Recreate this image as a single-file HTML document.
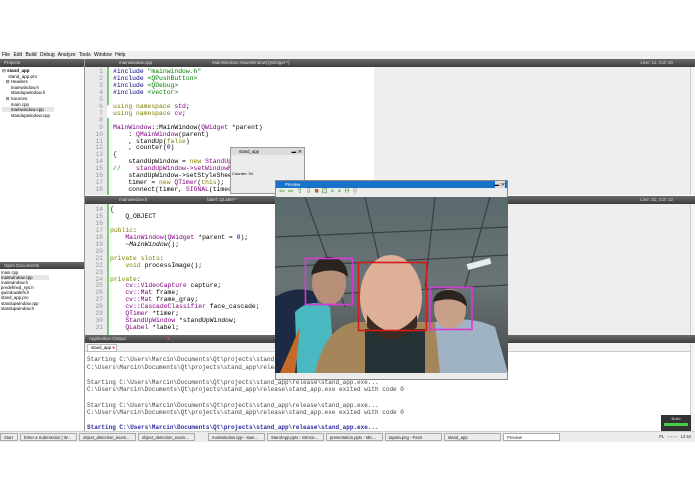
<!DOCTYPE html>
<html><head><meta charset="utf-8"><style>
*{margin:0;padding:0;box-sizing:border-box}
body{width:695px;height:494px;background:#fff;position:relative;overflow:hidden;font-family:"Liberation Sans",sans-serif}
.a{position:absolute}
.menu{left:0;top:51px;width:695px;height:8px;background:#f0f0f0;font-size:5px;line-height:8px;padding-left:2px;word-spacing:2px}
.bar{background:linear-gradient(#6a6a6a,#3e3e3e);color:#ddd;font-size:4.5px;line-height:8px;padding-left:4px}
.mono{font-family:"Liberation Mono","DejaVu Sans Mono",monospace}
.code{font-size:6.4px;line-height:6.95px;white-space:pre;color:#000}
.ln{background:#eaeaea;color:#999;text-align:right;font-size:6.4px;line-height:6.95px;white-space:pre;padding-right:4px}
.k{color:#808000}.c{color:#800080}.s{color:#008000}.n{color:#000080}
.tree{font-size:4.5px;line-height:5.6px;color:#000;white-space:pre}
.out{font-size:6px;line-height:7.6px;white-space:pre;color:#444}
.tb{font-size:4.2px;line-height:8px;color:#222;white-space:nowrap}
.tbi{position:absolute;top:1px;height:8px;border:1px solid #aaa;background:#ececec;padding-left:3px;overflow:hidden}
</style></head><body>
<div class="a menu">File Edit Build Debug Analyze Tools Window Help</div>
<div class="a bar" style="left:0;top:59px;width:84px;height:8px">Projects</div>
<div class="a bar" style="left:85px;top:59px;width:610px;height:8px"><span style="margin-left:30px">mainwindow.cpp</span><span style="margin-left:60px">MainWindow::MainWindow(QWidget *)</span><span style="position:absolute;right:22px">Line: 11, Col: 20</span></div>
<div class="a tree" style="left:2px;top:68px">⊟ <b>stand_app</b>
     stand_app.pro
   ⊟ Headers
       mainwindow.h
       standupwindow.h
   ⊟ Sources
       main.cpp
<span style="background:#e6e6e6">       mainwindow.cpp        </span>
       standupwindow.cpp</div>
<div class="a bar" style="left:0;top:262px;width:84px;height:7px;line-height:7px">Open Documents</div>
<div class="a tree" style="left:1px;top:270px;line-height:5.1px;font-size:4.3px">main.cpp
<span style="background:#e6e6e6">mainwindow.cpp              </span>
mainwindow.h
predefined_sys.h
qwindowdefs.h
stand_app.pro
standupwindow.cpp
standupwindow.h</div>
<div class="a" style="left:84px;top:59px;width:1px;height:382px;background:#999"></div>
<div class="a" style="left:374px;top:67px;width:316px;height:128px;background:#eeeeee"></div>
<div class="a" style="left:690px;top:67px;width:5px;height:128px;background:#f4f4f4;border-left:1px solid #ccc"></div>
<div class="a ln mono" style="left:85px;top:67px;width:22px;height:128px;padding-top:2px">1
2
3
4
5
6
7
8
9
10
11
12
13
14
15
16
17
18</div>
<div class="a" style="left:107px;top:67px;width:2px;height:128px;background:linear-gradient(#7c7 0,#7c7 30%,#fff 30%,#fff 40%,#7c7 40%)"></div>
<div class="a code mono" style="left:113px;top:69px"><span class="n">#include</span> <span class="s">"mainwindow.h"</span>
<span class="n">#include</span> <span class="s">&lt;QPushButton&gt;</span>
<span class="n">#include</span> <span class="s">&lt;QDebug&gt;</span>
<span class="n">#include</span> <span class="s">&lt;vector&gt;</span>

<span class="k">using namespace</span> <span class="c">std</span>;
<span class="k">using namespace</span> <span class="c">cv</span>;

<span class="c">MainWindow</span>::MainWindow(<span class="c">QWidget</span> *parent)
    : <span class="c">QMainWindow</span>(parent)
    , standUp(<span class="k">false</span>)
    , counter(<span class="n">0</span>)
{
    standUpWindow = <span class="k">new</span> <span class="c">StandUpWindo</span>
<span class="s">//</span>    <span class="c">standUpWindow-&gt;setWindowModali</span>
    standUpWindow-&gt;setStyleSheet(<span class="s">"ba</span>
    timer = <span class="k">new</span> <span class="c">QTimer</span>(<span class="k">this</span>);
    connect(timer, <span class="c">SIGNAL</span>(timeout()),</div>
<div class="a bar" style="left:85px;top:196px;width:610px;height:8px"><span style="margin-left:30px">mainwindow.h</span><span style="margin-left:60px">label: QLabel *</span><span style="position:absolute;right:22px">Line: 31, Col: 12</span></div>
<div class="a" style="left:374px;top:204px;width:316px;height:131px;background:#eeeeee"></div>
<div class="a" style="left:690px;top:204px;width:5px;height:131px;background:#f4f4f4;border-left:1px solid #ccc"></div>
<div class="a ln mono" style="left:85px;top:204px;width:22px;height:131px;padding-top:3px">14
15
16
17
18
19
20
21
22
23
24
25
26
27
28
29
30
31</div>
<div class="a" style="left:107px;top:204px;width:2px;height:131px;background:#7c7"></div>
<div class="a code mono" style="left:110px;top:207px">{
    Q_OBJECT

<span class="k">public</span>:
    <span class="c">MainWindow</span>(<span class="c">QWidget</span> *parent = <span class="n">0</span>);
    ~<i>MainWindow</i>();

<span class="k">private slots</span>:
    <span class="k">void</span> processImage();

<span class="k">private</span>:
    <span class="c">cv::VideoCapture</span> capture;
    <span class="c">cv::Mat</span> frame;
    <span class="c">cv::Mat</span> frame_gray;
    <span class="c">cv::CascadeClassifier</span> face_cascade;
    <span class="c">QTimer</span> *timer;
    <span class="c">StandUpWindow</span> *standUpWindow;
    <span class="c">QLabel</span> *label;</div>
<div class="a bar" style="left:85px;top:335px;width:610px;height:8px;line-height:8px">Application Output <span style="color:#e44;margin-left:40px">■</span></div>
<div class="a" style="left:85px;top:343px;width:610px;height:9px;background:#f0f0f0;border-bottom:1px solid #ccc"></div>
<div class="a" style="left:87px;top:344px;width:30px;height:8px;background:#fff;border:1px solid #bbb;font-size:4.3px;line-height:6px;padding-left:3px">stand_app <span style="color:#e55">■</span></div>
<div class="a out mono" style="left:87px;top:356px">Starting C:\Users\Marcin\Documents\Qt\projects\stand_app\release\stand_app.exe...
C:\Users\Marcin\Documents\Qt\projects\stand_app\release\stand_app.exe exited with code 0

Starting C:\Users\Marcin\Documents\Qt\projects\stand_app\release\stand_app.exe...
C:\Users\Marcin\Documents\Qt\projects\stand_app\release\stand_app.exe exited with code 0

Starting C:\Users\Marcin\Documents\Qt\projects\stand_app\release\stand_app.exe...
C:\Users\Marcin\Documents\Qt\projects\stand_app\release\stand_app.exe exited with code 0

<b style="color:#2a2aa0">Starting C:\Users\Marcin\Documents\Qt\projects\stand_app\release\stand_app.exe...</b></div>
<div class="a" style="left:690px;top:343px;width:5px;height:88px;background:#f4f4f4;border-left:1px solid #ccc"></div>
<div class="a" style="left:661px;top:415px;width:30px;height:16px;background:#333;color:#ddd;font-size:4px;text-align:center;line-height:7px">Build<div style="margin:1px 3px;height:3px;background:#4c4"></div></div>
<div class="a tb" style="left:0;top:431px;width:695px;height:11px;background:#ececec;border-top:1px solid #ccc">
<div class="tbi" style="left:0;width:18px">Start</div>
<div class="tbi" style="left:20px;width:57px">Enter a Submission | W...</div>
<div class="tbi" style="left:79px;width:57px">object_detection_exam...</div>
<div class="tbi" style="left:138px;width:57px">object_detection_exam...</div>
<div class="tbi" style="left:208px;width:57px">mainwindow.cpp - stan...</div>
<div class="tbi" style="left:267px;width:57px">StandApp.pptx - Micros...</div>
<div class="tbi" style="left:326px;width:57px">presentation.pptx - Mic...</div>
<div class="tbi" style="left:385px;width:57px">tapeta.png - Paint</div>
<div class="tbi" style="left:444px;width:57px">stand_app</div>
<div class="tbi" style="left:503px;width:57px;background:#fff">Preview</div>
<div style="position:absolute;right:4px;top:1px">PL &nbsp; ▫ ▫ ▫ ▫ &nbsp; 12:44</div>
</div>
<div class="a" style="left:230px;top:147px;width:75px;height:47px;background:#ececec;border:1px solid #999"></div>
<div class="a" style="left:231px;top:148px;width:73px;height:7px;background:#dcdcdc;font-size:4.3px;line-height:7px;padding-left:8px">stand_app<span style="position:absolute;right:2px">▬□✕</span></div>
<div class="a" style="left:232px;top:171px;font-size:4px">Counter: 94</div>
<div class="a" style="left:275px;top:180px;width:233px;height:200px;background:#ececec;border:1px solid #888"></div>
<div class="a" style="left:276px;top:181px;width:231px;height:7px;background:#1673c8;color:#fff;font-size:4.3px;line-height:7px;padding-left:9px">Preview<span style="position:absolute;right:2px;color:#000;background:#ddd">▬□✕</span></div>
<div class="a" style="left:279px;top:188px;font-size:7px;line-height:8px;color:#3a8a1a;letter-spacing:3px">⇦⇨⇧⇩<span style="color:#a63">■</span>⊡⌕⌕<span style="color:#5a3">H</span><span style="color:#999">⚲</span></div>
<svg class="a" style="left:275px;top:197px" width="233" height="176" viewBox="0 0 233 176">
<defs><linearGradient id="g" x1="0" y1="0" x2="0" y2="1"><stop offset="0" stop-color="#5a6a6c"/><stop offset="0.5" stop-color="#6a7476"/><stop offset="1" stop-color="#444849"/></linearGradient></defs>
<rect width="233" height="176" fill="url(#g)"/>
<g stroke="#3a3f41" stroke-width="1.2" fill="none">
<path d="M0 40 L233 30"/><path d="M0 70 L233 58"/><path d="M30 0 L70 110"/><path d="M90 0 L110 90"/><path d="M160 0 L150 90"/><path d="M215 0 L190 90"/><path d="M0 100 L233 88"/></g>
<rect x="192" y="64" width="24" height="6" fill="#e8ecea" transform="rotate(-15 204 67)"/>
<path d="M0 100 Q20 88 40 95 L60 176 L0 176Z" fill="#1c2a44"/>
<path d="M20 115 Q35 100 55 110 L60 176 L22 176Z" fill="#4ab8c0"/>
<path d="M25 130 L20 176 L5 176Z" fill="#c66a2a"/>
<ellipse cx="54" cy="86" rx="17" ry="22" fill="#b8907a"/>
<path d="M36 78 Q40 58 56 60 Q72 62 73 80 Q60 68 36 78Z" fill="#2a2420"/>
<path d="M40 176 Q50 130 80 125 L175 125 Q205 130 215 176Z" fill="#a4865a"/>
<path d="M90 132 L150 132 L150 176 L90 176Z" fill="#253236"/>
<path d="M160 125 Q195 118 220 130 L233 176 L165 176Z" fill="#9fb3c4"/>
<ellipse cx="116" cy="100" rx="31" ry="42" fill="#deb098"/>
<path d="M92 118 Q116 150 142 118 L142 130 Q116 155 92 130Z" fill="#3b2a20"/>
<ellipse cx="175" cy="112" rx="16" ry="20" fill="#c8a08a"/>
<path d="M158 105 Q160 92 177 93 Q192 96 192 110 Q181 98 158 105Z" fill="#2a2420"/>
<rect x="30.5" y="61.5" width="47" height="46" fill="none" stroke="#d83ad8" stroke-width="1.6"/>
<rect x="83.5" y="65.5" width="68" height="68" fill="none" stroke="#d81a1a" stroke-width="1.6"/>
<rect x="155" y="90.5" width="42" height="42" fill="none" stroke="#d83ad8" stroke-width="1.6"/>
</svg>
</body></html>
